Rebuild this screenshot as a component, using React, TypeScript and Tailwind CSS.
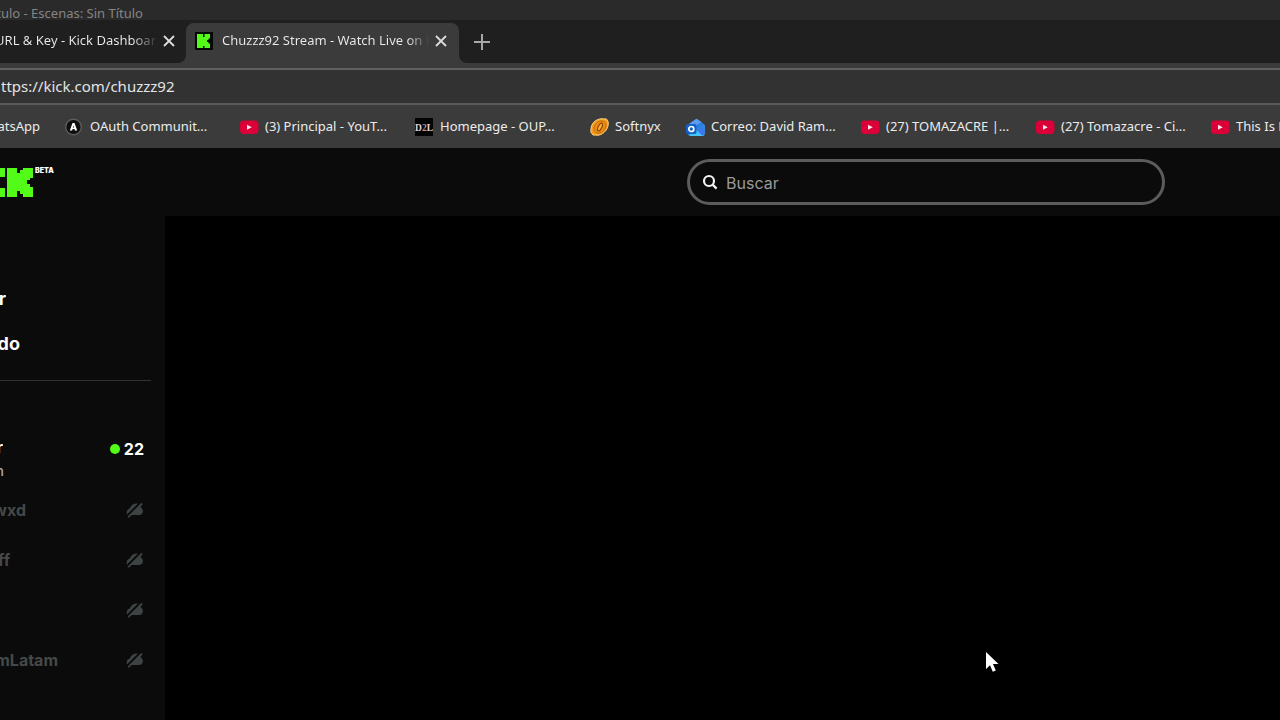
import type { ReactNode } from "react";

function CloseIcon() {
  return (
    <svg viewBox="0 0 12 12" className="size-3" fill="none" stroke="#dcdcdc" strokeWidth="1.8" aria-hidden="true">
      <path d="M1 1l10 10M11 1L1 11" />
    </svg>
  );
}

function YouTubeIcon() {
  return (
    <svg viewBox="0 0 20 18" className="h-[18px] w-5 shrink-0" aria-hidden="true">
      <rect x="0" y="2.500" width="18.500" height="13.500" rx="4" fill="#dc0038" />
      <path d="M7 6.700v5l4.800-2.500z" fill="#ffe4ea" />
    </svg>
  );
}

function OAuthIcon() {
  return (
    <svg viewBox="0 0 18 18" className="size-[18px] shrink-0" aria-hidden="true">
      <circle cx="8.500" cy="9" r="7.800" fill="#0e0e0e" stroke="#5c5c5c" strokeWidth="1.400" />
      <path d="M7.500 5h2l2.700 7.500h-2.300l-.5-1.500H7.600l-.5 1.500H4.800z" fill="#fff" />
      <path d="M8.500 7.500l-.6 2h1.200z" fill="#0c0c0c" />
    </svg>
  );
}

function D2LIcon() {
  return (
    <svg viewBox="0 0 18 18" className="size-[18px] shrink-0" aria-hidden="true">
      <rect width="18" height="18" fill="#030303" />
      <text x="9" y="12.500" textAnchor="middle" fontSize="9.500" fontWeight="700" fill="#e2d9d9" className="font-['Liberation_Serif',serif]">
        D<tspan fill="#c4908c">2</tspan>L
      </text>
    </svg>
  );
}

function SoftnyxIcon() {
  return (
    <svg viewBox="0 0 20 18" className="h-[18px] w-5 shrink-0" aria-hidden="true">
      <path d="M1 11C1 6 5 1.500 11 .8l5.500.2 1.700 3C19 10 14.500 16 8.500 17.200L3 17 .8 14z" fill="#f39a1c" stroke="#ffd27c" strokeWidth="1" />
      <ellipse cx="10" cy="9" rx="6.800" ry="5.300" transform="rotate(-48 10 9)" fill="#ee8b13" stroke="#b86410" strokeWidth=".8" />
      <ellipse cx="10" cy="9" rx="4.200" ry="1.800" transform="rotate(-65 10 9)" fill="#ffb13b" stroke="#8c4507" strokeWidth="1.200" />
    </svg>
  );
}

function OutlookIcon() {
  return (
    <svg viewBox="0 0 20 19" className="h-[19px] w-5 shrink-0" aria-hidden="true">
      <path d="M2 6.500L10.500.8l8 5.700v9A2.500 2.500 0 0 1 16 18H4.500A2.500 2.500 0 0 1 2 15.500z" fill="#2a7fe0" />
      <path d="M3.500 5.500l7-4.700 5 3.200-8 5.200z" fill="#5f9bee" />
      <path d="M18.500 7v8.500A2.500 2.500 0 0 1 16 18H4.500L3 17z" fill="#45c6fb" />
      <path d="M18.500 7l-8 5 5.500 5.500a2.500 2.500 0 0 0 2.500-2z" fill="#3b78ee" />
      <rect x="0" y="6" width="10.500" height="10" rx="1.800" fill="#1260c8" />
      <circle cx="5.300" cy="11" r="2.500" fill="none" stroke="#fff" strokeWidth="1.700" />
    </svg>
  );
}

function KickFavicon() {
  return (
    <svg viewBox="0 0 18 18" className="size-[18px] shrink-0" aria-hidden="true">
      <rect width="18" height="18" fill="#050805" />
      <path d="M2 2h6v3h1.500V2H15v4.500h-1.500V8H12v2h1.500v1.500H15V16H9.500v-2H8v2H2z" fill="#53fc18" />
    </svg>
  );
}

function KickLogo() {
  return (
    <svg viewBox="0 0 55 36" className="h-9 w-[55px]" role="img" aria-label="Kick beta">
      <path d="M0 4h5v9H0zM0 24h5v9H0z" fill="#53fc18" />
      <path d="M7 4h10v5h3V6h3V4h10v10h-3v2h-3v4h3v3h3v10H23v-3h-3v-3h-3v6H7z" fill="#53fc18" />
      <text x="35" y="9" fontSize="7" fontWeight="900" fill="#fff" className="font-[Inter,sans-serif]">
        BETA
      </text>
    </svg>
  );
}

function OfflineIcon() {
  return (
    <svg viewBox="0 0 18 16" className="h-4 w-[18px] shrink-0" role="img" aria-label="Offline">
      <path d="M1 12.500C0 9.500 1.500 7 4 6.200 5 2.500 8.500.9 12 1.500z" fill="#3d4242" />
      <path d="M15.200.8l1.500 1.300-2.200 3.200c2.200 1.200 2.900 3.300 2.200 5.300-.5 1.500-1.800 2.500-3.300 2.500H5.800L2.800 15.800 1.500 14.500z" fill="#3d4242" />
      <path d="M14.200.8L1.200 13.800" stroke="#0b0b0b" strokeWidth="1.200" />
    </svg>
  );
}

const youtube = <YouTubeIcon />;

const bookmarks: { label: string; icon: ReactNode; size: string }[] = [
  { label: "OAuth Communit...", icon: <OAuthIcon />, size: "w-[175px]" },
  { label: "(3) Principal - YouT...", icon: youtube, size: "w-[175px]" },
  { label: "Homepage - OUP...", icon: <D2LIcon />, size: "w-[175px]" },
  { label: "Softnyx", icon: <SoftnyxIcon />, size: "w-24" },
  { label: "Correo: David Ram...", icon: <OutlookIcon />, size: "w-[175px]" },
  { label: "(27) TOMAZACRE |...", icon: youtube, size: "w-[175px]" },
  { label: "(27) Tomazacre - Ci...", icon: youtube, size: "w-[175px]" },
  { label: "This Is N", icon: youtube, size: "w-[175px]" },
];

const offlineChannels = [
  { name: "wxd", width: "w-[26px]" },
  { name: "ff", width: "w-[10px]" },
  { name: "", width: "w-0" },
  { name: "mLatam", width: "w-[58px]" },
];

export default function App() {
  return (
    <div className="flex min-h-screen flex-col overflow-hidden bg-black font-['Noto_Sans',sans-serif] text-[13px] text-[#ececec]">
      <div className="flex h-5 items-end bg-[#2a2a2a] text-[#858585]">
        <span className="flex w-[143px] justify-end overflow-hidden leading-[14px] whitespace-nowrap">tulo - Escenas: Sin Título</span>
      </div>

      <div className="flex h-[43px] items-end bg-[#3b3b3b]">
        <div className="flex h-[43px] w-[186px] items-center gap-[7px] rounded-br-lg bg-[#1f1f1f] pt-[2px] pb-1">
          <span className="flex w-[156px] justify-end overflow-hidden bg-linear-to-r from-[#ececec] from-85% to-[#333333] bg-clip-text whitespace-nowrap text-transparent">
            URL &amp; Key - Kick Dashboar
          </span>
          <button aria-label="Close tab">
            <CloseIcon />
          </button>
        </div>
        <div className="h-[43px] w-[273px] bg-[#1f1f1f] pt-[3px]">
          <div className="flex h-10 items-center rounded-t-lg bg-[#3b3b3b] pb-1 pl-[9px]">
            <KickFavicon />
            <span className="ml-[9px] w-[207px] overflow-hidden bg-linear-to-r from-[#ececec] from-90% to-[#3b3b3b] bg-clip-text whitespace-nowrap text-transparent">
              Chuzzz92 Stream - Watch Live on K
            </span>
            <button aria-label="Close tab" className="ml-[6px]">
              <CloseIcon />
            </button>
          </div>
        </div>
        <div className="flex h-[43px] flex-1 items-center rounded-bl-lg bg-[#1f1f1f] pl-[14px]">
          <button aria-label="New tab">
            <svg viewBox="0 0 18 18" className="size-[18px]" fill="none" stroke="#a8a8a8" strokeWidth="2" aria-hidden="true">
              <path d="M9 1v16M1 9h16" />
            </svg>
          </button>
        </div>
      </div>

      <div className="bg-[#3b3b3b] pt-[5px]">
        <div className="flex h-[37px] items-center border-y-2 border-t-[#606060] border-b-[#5a5a5a] bg-[#323232]">
          <input
            aria-label="Address"
            defaultValue="ttps://kick.com/chuzzz92"
            className="w-full bg-transparent pl-px text-[15px] text-[#e4e4e4] outline-none"
          />
        </div>
      </div>

      <nav className="flex h-[43px] items-center overflow-hidden bg-[#3b3b3b] pt-px whitespace-nowrap">
        <a href="#" className="flex w-10 shrink-0 justify-end overflow-hidden">
          atsApp
        </a>
        <div className="ml-[25px] flex">
          {bookmarks.map((b) => (
            <a key={b.label} href="#" className={`flex shrink-0 items-center ${b.size}`}>
              <span className="flex w-[25px] shrink-0">{b.icon}</span>
              {b.label}
            </a>
          ))}
        </div>
      </nav>

      <header className="flex h-[68px] items-center justify-between bg-[#0b0b0b] pr-[115px]">
        <KickLogo />
        <label className="flex h-[46px] w-[478px] items-center gap-2 rounded-full border-[3px] border-[#5c5c5c] px-3">
          <svg viewBox="0 0 16 16" className="size-4 shrink-0" fill="none" stroke="#f2f2f2" strokeWidth="2.200" aria-hidden="true">
            <circle cx="7" cy="7" r="5" />
            <path d="M10.600 10.600l4 4" />
          </svg>
          <input
            type="search"
            aria-label="Buscar"
            placeholder="Buscar"
            className="w-full bg-transparent pt-px font-[Inter,sans-serif] text-base outline-none placeholder:text-[#9a9a9a]"
          />
        </label>
      </header>

      <div className="flex flex-1">
        <aside className="w-[165px] shrink-0 bg-[#0b0b0b] pt-[60px] font-[Inter,sans-serif] font-bold text-white">
          <a href="#" className="flex h-[45px] w-[6px] items-center justify-end overflow-hidden text-lg">
            r
          </a>
          <a href="#" className="flex h-[45px] w-5 items-center justify-end overflow-hidden text-lg">
            do
          </a>
          <hr className="mt-[14px] mr-[14px] border-[#333333]" />
          <div className="mt-[54px] flex h-[50px] items-start justify-between pr-[21px]">
            <div className="leading-6">
              <p className="flex w-[3px] justify-end overflow-hidden text-base">r</p>
              <p className="flex w-1 justify-end overflow-hidden text-sm leading-6 font-medium text-[#a8a8a8]">n</p>
            </div>
            <span className="flex items-center gap-1 text-base leading-7">
              <span className="size-[10px] rounded-full bg-[#53fc18]" />
              22
            </span>
          </div>
          <ul className="text-base text-[#454949]">
            {offlineChannels.map((c) => (
              <li key={c.name} className="flex h-[50px] items-center justify-between pr-[21px]">
                <span className={`flex justify-end overflow-hidden ${c.width}`}>{c.name}</span>
                <OfflineIcon />
              </li>
            ))}
          </ul>
        </aside>
        <main className="relative flex-1 bg-black">
          <svg viewBox="0 0 14 22" className="absolute top-[435px] left-[820px] h-[22px] w-[14px]" aria-hidden="true">
            <path d="M1 1v17l4-3.800 2.800 6.500 3-1.300L8 13h5.500z" fill="#fff" />
          </svg>
        </main>
      </div>
    </div>
  );
}
